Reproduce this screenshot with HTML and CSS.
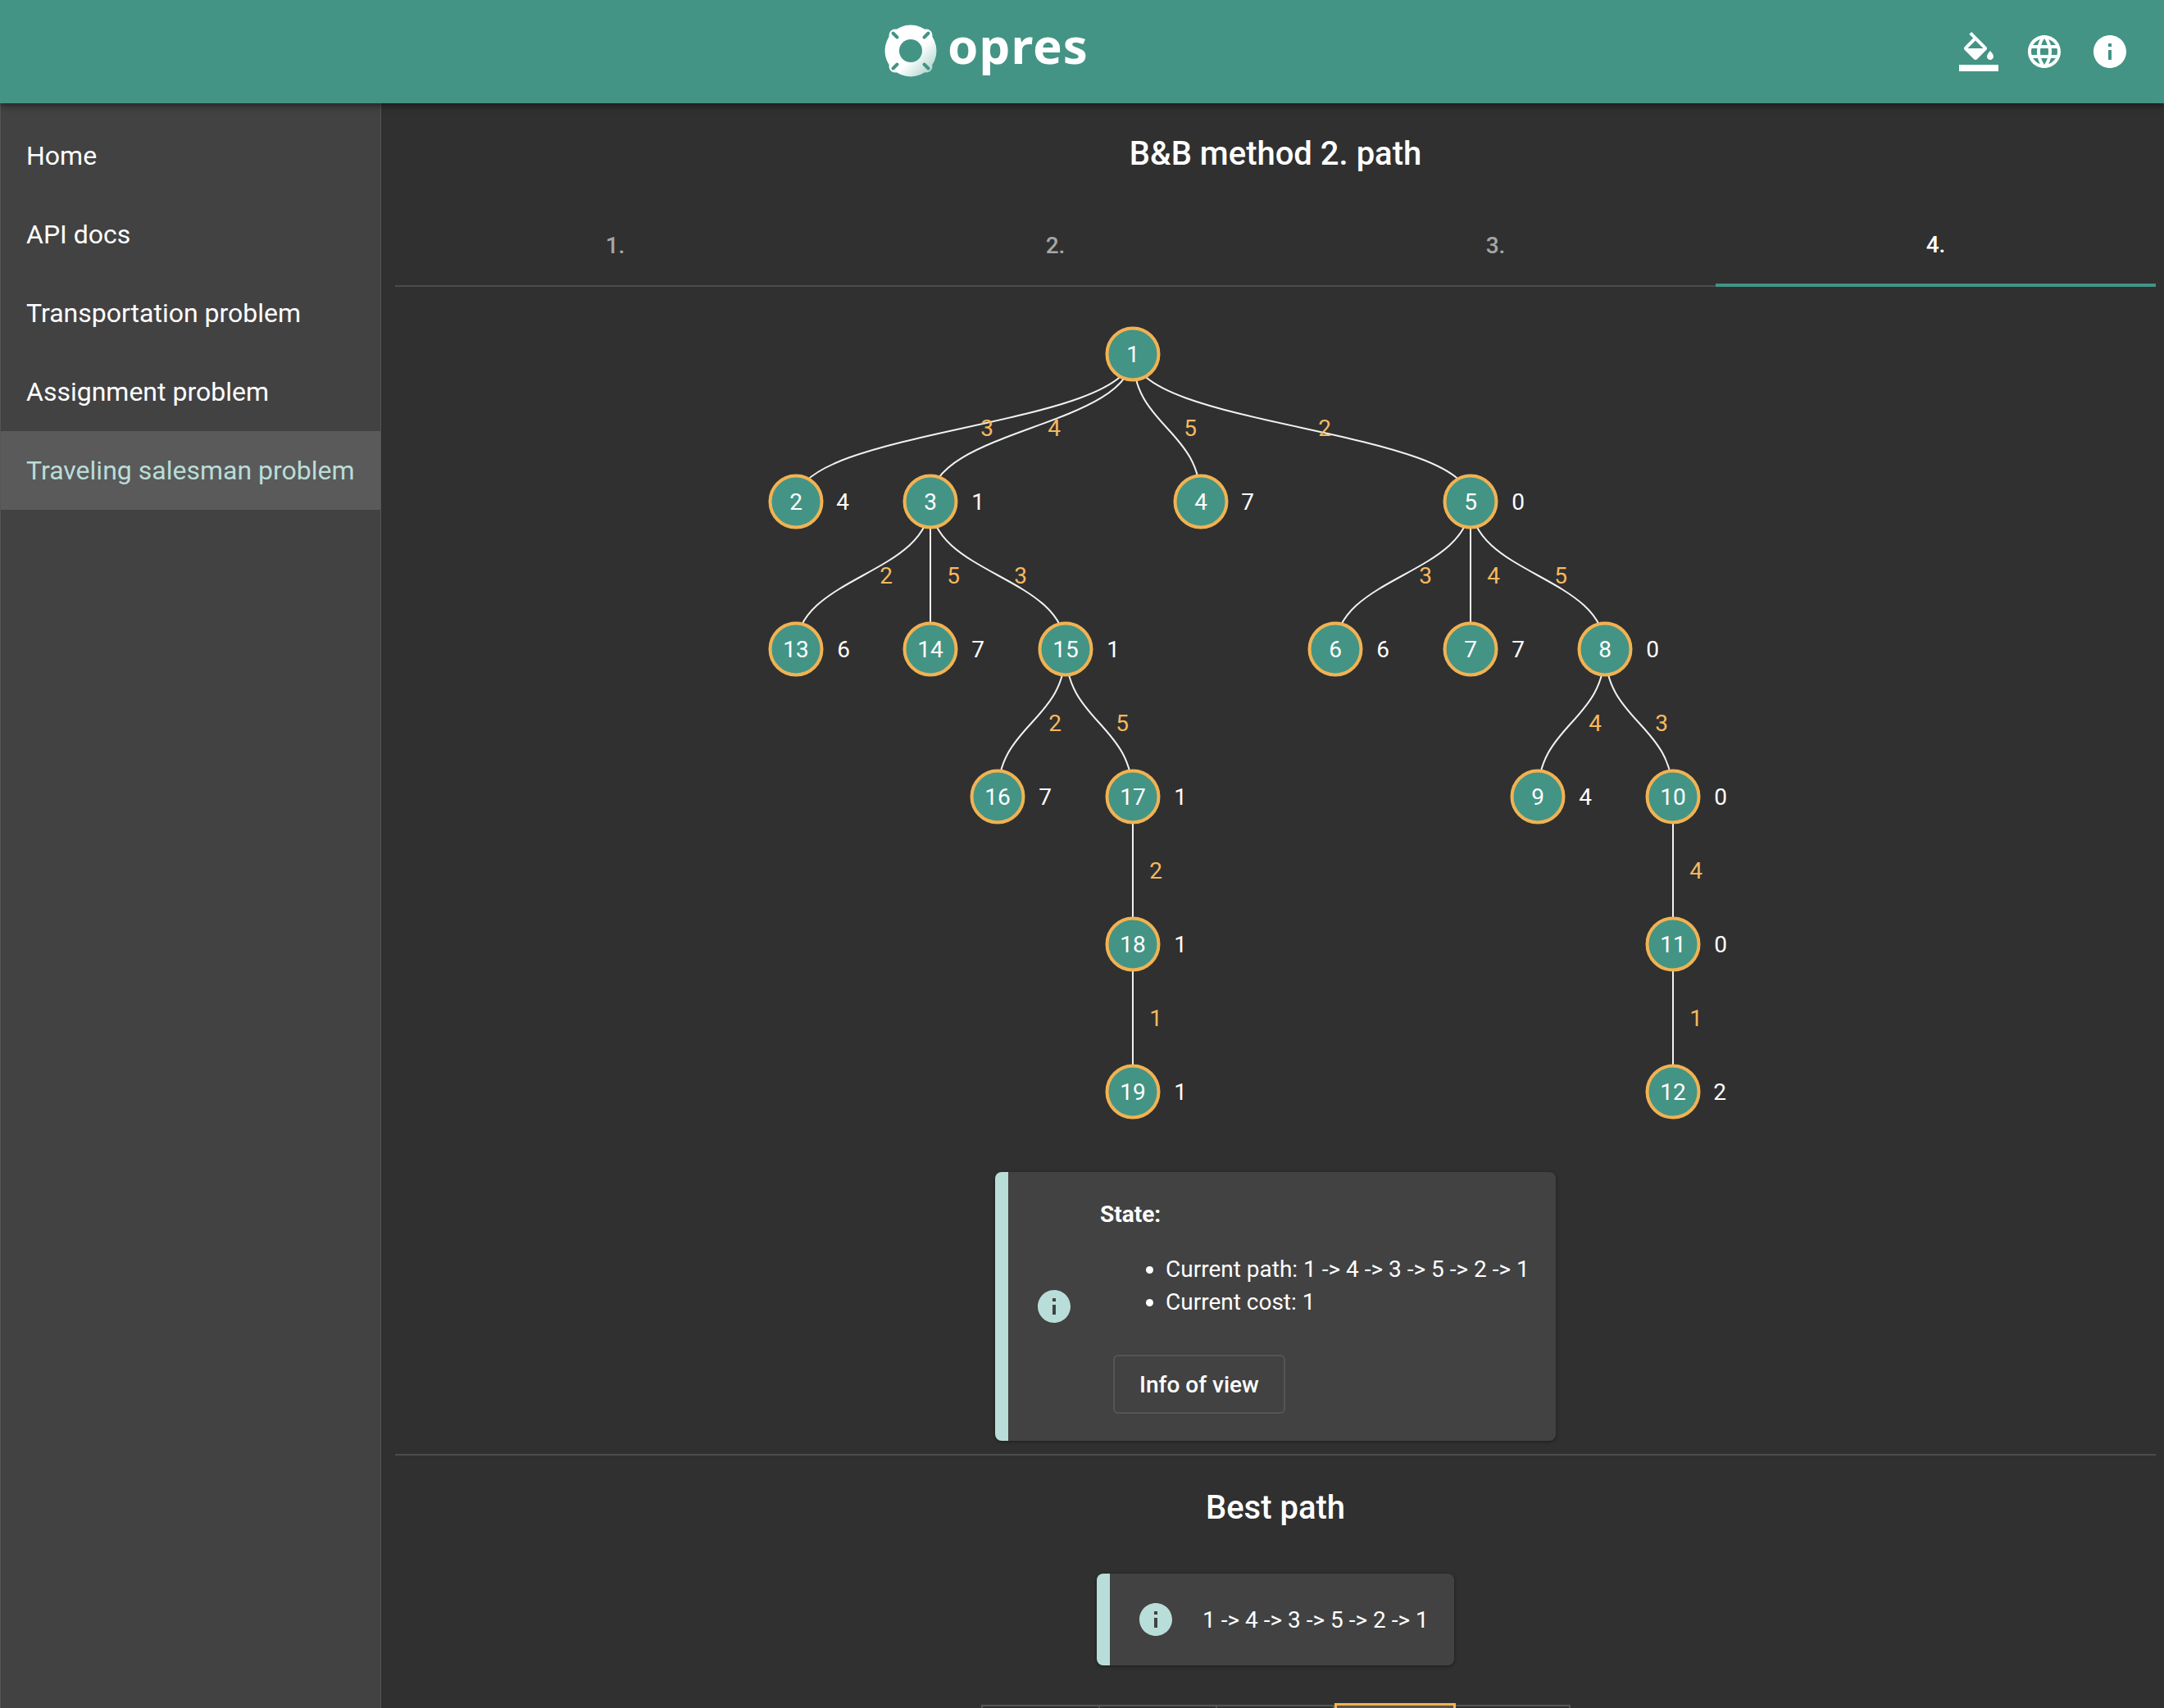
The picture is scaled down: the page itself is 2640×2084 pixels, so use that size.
FILE: index.html
```html
<!DOCTYPE html>
<html>
<head>
  <meta charset="utf-8">
  <title>opres</title>
  <link rel="stylesheet" href="styles.css">
</head>
<body>
  <header class="topbar">
    <div class="logo">
      <svg class="logo-mark" viewBox="0 0 64 64" width="64" height="64">
        <defs>
          <linearGradient id="ring" gradientUnits="userSpaceOnUse" x1="14" y1="14" x2="60" y2="60">
            <stop offset="0.5" stop-color="#ffffff"/>
            <stop offset="1" stop-color="#a6cfc8"/>
          </linearGradient>
        </defs>
        <g fill="url(#ring)">
          <circle cx="32" cy="32" r="31.500"/>
          <circle cx="13" cy="13" r="7.500"/>
          <circle cx="51" cy="13" r="7.500"/>
          <circle cx="13" cy="51" r="7.500"/>
          <circle cx="51" cy="51" r="7.500"/>
        </g>
        <circle class="logo-cut" cx="32" cy="32" r="14"/>
        <g class="logo-slots">
          <path d="M10.500 10.500l5 5"/><path d="M53.500 10.500l-5 5"/><path d="M10.500 53.500l5 -5"/><path d="M53.500 53.500l-5 -5"/>
        </g>
      </svg>
      <span class="logo-text">opres</span>
    </div>
    <div class="topbar-icons">
      <svg class="icon" viewBox="0 0 24 24"><path d="M16.560 8.940L7.620 0 6.210 1.410l2.380 2.380-5.150 5.150c-.59.59-.59 1.540 0 2.120l5.500 5.500c.29.29.68.44 1.060.44s.77-.15 1.060-.44l5.500-5.500c.59-.58.59-1.530 0-2.120zM5.210 10L10 5.210 14.790 10H5.210zM19 11.500s-2 2.170-2 3.500c0 1.100.9 2 2 2s2-.9 2-2c0-1.330-2-3.500-2-3.500zM0 20h24v4H0v-4z"/></svg>
      <svg class="icon" viewBox="0 0 24 24"><path d="M11.990 2C6.470 2 2 6.480 2 12s4.470 10 9.990 10C17.520 22 22 17.520 22 12S17.520 2 11.990 2zm6.930 6h-2.950c-.32-1.250-.78-2.450-1.380-3.560 1.840.63 3.370 1.910 4.330 3.560zM12 4.040c.83 1.200 1.480 2.530 1.910 3.960h-3.820c.43-1.430 1.080-2.760 1.910-3.960zM4.260 14C4.100 13.360 4 12.690 4 12s.1-1.360.26-2h3.380c-.08.66-.14 1.320-.14 2s.06 1.340.14 2H4.260zm.82 2h2.950c.32 1.250.78 2.450 1.380 3.560-1.840-.63-3.370-1.900-4.330-3.560zm2.950-8H5.080c.96-1.660 2.490-2.930 4.330-3.560C8.810 5.550 8.350 6.750 8.030 8zM12 19.960c-.83-1.200-1.480-2.530-1.910-3.960h3.820c-.43 1.430-1.080 2.760-1.910 3.960zM14.340 14H9.660c-.09-.66-.16-1.320-.16-2s.07-1.350.16-2h4.680c.09.65.16 1.320.16 2s-.07 1.340-.16 2zm.25 5.560c.6-1.110 1.060-2.310 1.380-3.560h2.950c-.96 1.650-2.490 2.930-4.330 3.560zM16.360 14c.08-.66.14-1.320.14-2s-.06-1.340-.14-2h3.380c.16.640.26 1.310.26 2s-.1 1.360-.26 2h-3.380z"/></svg>
      <svg class="icon" viewBox="0 0 24 24"><path d="M12 2C6.480 2 2 6.480 2 12s4.480 10 10 10 10-4.480 10-10S17.520 2 12 2zm1 15h-2v-6h2v6zm0-8h-2V7h2v2z"/></svg>
    </div>
  </header>

  <div class="layout">
    <nav class="sidebar">
      <a class="nav-item">Home</a>
      <a class="nav-item">API docs</a>
      <a class="nav-item">Transportation problem</a>
      <a class="nav-item">Assignment problem</a>
      <a class="nav-item active">Traveling salesman problem</a>
    </nav>

    <main class="content">
      <h1 class="title">B&amp;B method 2. path</h1>
      <div class="tabs">
        <div class="tab">1.</div>
        <div class="tab">2.</div>
        <div class="tab">3.</div>
        <div class="tab active">4.</div>
      </div>

      <div class="tree-wrap">
        <svg class="tree" viewBox="482 350 2148 1040" width="2148" height="1040">
          <g class="edges">
            <path d="M1382 432C1382 522 971 522 971 612"/>
            <path d="M1382 432C1382 522 1135 522 1135 612"/>
            <path d="M1382 432C1382 522 1465 522 1465 612"/>
            <path d="M1382 432C1382 522 1794 522 1794 612"/>
            <path d="M1135 612C1135 702 971 702 971 792"/>
            <path d="M1135 612L1135 792"/>
            <path d="M1135 612C1135 702 1300 702 1300 792"/>
            <path d="M1794 612C1794 702 1629 702 1629 792"/>
            <path d="M1794 612L1794 792"/>
            <path d="M1794 612C1794 702 1958 702 1958 792"/>
            <path d="M1300 792C1300 882 1217 882 1217 972"/>
            <path d="M1300 792C1300 882 1382 882 1382 972"/>
            <path d="M1958 792C1958 882 1876 882 1876 972"/>
            <path d="M1958 792C1958 882 2041 882 2041 972"/>
            <path d="M1382 972L1382 1332"/>
            <path d="M2041 972L2041 1332"/>
          </g>
          <g class="edge-labels">
            <text x="1204" y="522">3</text>
            <text x="1286" y="522">4</text>
            <text x="1452" y="522">5</text>
            <text x="1616" y="522">2</text>
            <text x="1081" y="702">2</text>
            <text x="1163" y="702">5</text>
            <text x="1245" y="702">3</text>
            <text x="1739" y="702">3</text>
            <text x="1822" y="702">4</text>
            <text x="1904" y="702">5</text>
            <text x="1287" y="882">2</text>
            <text x="1369" y="882">5</text>
            <text x="1946" y="882">4</text>
            <text x="2027" y="882">3</text>
            <text x="1410" y="1062">2</text>
            <text x="1410" y="1242">1</text>
            <text x="2069" y="1062">4</text>
            <text x="2069" y="1242">1</text>
          </g>
          <g class="nodes">
            <circle cx="1382" cy="432" r="31.500"/>
            <circle cx="971" cy="612" r="31.500"/>
            <circle cx="1135" cy="612" r="31.500"/>
            <circle cx="1465" cy="612" r="31.500"/>
            <circle cx="1794" cy="612" r="31.500"/>
            <circle cx="971" cy="792" r="31.500"/>
            <circle cx="1135" cy="792" r="31.500"/>
            <circle cx="1300" cy="792" r="31.500"/>
            <circle cx="1629" cy="792" r="31.500"/>
            <circle cx="1794" cy="792" r="31.500"/>
            <circle cx="1958" cy="792" r="31.500"/>
            <circle cx="1217" cy="972" r="31.500"/>
            <circle cx="1382" cy="972" r="31.500"/>
            <circle cx="1876" cy="972" r="31.500"/>
            <circle cx="2041" cy="972" r="31.500"/>
            <circle cx="1382" cy="1152" r="31.500"/>
            <circle cx="2041" cy="1152" r="31.500"/>
            <circle cx="1382" cy="1332" r="31.500"/>
            <circle cx="2041" cy="1332" r="31.500"/>
          </g>
          <g class="node-labels">
            <text x="1382" y="432">1</text>
            <text x="971" y="612">2</text>
            <text x="1135" y="612">3</text>
            <text x="1465" y="612">4</text>
            <text x="1794" y="612">5</text>
            <text x="971" y="792">13</text>
            <text x="1135" y="792">14</text>
            <text x="1300" y="792">15</text>
            <text x="1629" y="792">6</text>
            <text x="1794" y="792">7</text>
            <text x="1958" y="792">8</text>
            <text x="1217" y="972">16</text>
            <text x="1382" y="972">17</text>
            <text x="1876" y="972">9</text>
            <text x="2041" y="972">10</text>
            <text x="1382" y="1152">18</text>
            <text x="2041" y="1152">11</text>
            <text x="1382" y="1332">19</text>
            <text x="2041" y="1332">12</text>
            <!-- bounds next to the nodes -->
            <text x="1028" y="612">4</text>
            <text x="1193" y="612">1</text>
            <text x="1522" y="612">7</text>
            <text x="1852" y="612">0</text>
            <text x="1029" y="792">6</text>
            <text x="1193" y="792">7</text>
            <text x="1358" y="792">1</text>
            <text x="1687" y="792">6</text>
            <text x="1852" y="792">7</text>
            <text x="2016" y="792">0</text>
            <text x="1275" y="972">7</text>
            <text x="1440" y="972">1</text>
            <text x="1934" y="972">4</text>
            <text x="2099" y="972">0</text>
            <text x="1440" y="1152">1</text>
            <text x="2099" y="1152">0</text>
            <text x="1440" y="1332">1</text>
            <text x="2098" y="1332">2</text>
          </g>
        </svg>
      </div>

      <div class="alert alert-state">
        <svg class="alert-icon" viewBox="2 2 20 20"><path d="M12 2C6.480 2 2 6.480 2 12s4.480 10 10 10 10-4.480 10-10S17.520 2 12 2zm1 15h-2v-6h2v6zm0-8h-2V7h2v2z"/></svg>
        <div class="alert-body">
          <div class="state-title">State:</div>
          <ul class="state-list">
            <li>Current path: 1 -&gt; 4 -&gt; 3 -&gt; 5 -&gt; 2 -&gt; 1</li>
            <li>Current cost: 1</li>
          </ul>
          <button class="info-btn">Info of view</button>
        </div>
      </div>

      <div class="divider"></div>

      <h2 class="subtitle">Best path</h2>

      <div class="alert alert-best">
        <svg class="alert-icon" viewBox="2 2 20 20"><path d="M12 2C6.480 2 2 6.480 2 12s4.480 10 10 10 10-4.480 10-10S17.520 2 12 2zm1 15h-2v-6h2v6zm0-8h-2V7h2v2z"/></svg>
        <span>1 -&gt; 4 -&gt; 3 -&gt; 5 -&gt; 2 -&gt; 1</span>
      </div>

      <div class="steps">
        <div class="step"></div>
        <div class="step"></div>
        <div class="step"></div>
        <div class="step active"></div>
        <div class="step"></div>
      </div>
    </main>
  </div>
</body>
</html>
```

FILE: styles.css
```css
html, body {
  margin: 0;
  height: 100%;
  overflow: hidden;
}
body {
  background: #303030;
  color: #fff;
  font-family: Roboto, "Liberation Sans", sans-serif;
  font-size: 28px;
}

/* top bar */
.topbar {
  height: 126px;
  background: #439485;
  display: flex;
  align-items: center;
  position: relative;
  z-index: 2;
  box-shadow: 0 3px 8px rgba(0, 0, 0, 0.45);
  padding: 0 42px 0 1079px;
}
.topbar-icons {
  display: flex;
  gap: 32px;
  margin-left: auto;
}
.icon {
  width: 48px;
  height: 48px;
  fill: #fff;
}
.logo {
  display: flex;
  align-items: center;
  gap: 13px;
}
.logo-mark {
  display: block;
  margin-top: -2px;
}
.logo-cut {
  fill: #439485;
}
.logo-slots path {
  stroke: #439485;
  stroke-width: 4;
  stroke-linecap: round;
}
.logo-text {
  font-family: "Noto Sans", sans-serif;
  font-size: 60px;
  font-weight: 700;
  line-height: 1;
  letter-spacing: 1px;
  padding-bottom: 16px;
}

/* sidebar + content */
.layout {
  display: flex;
  height: 1958px;
}
.sidebar {
  width: 463px;
  background: #424242;
  border-left: 1px solid #555;
  border-right: 1px solid #555;
  padding-top: 16px;
  flex-shrink: 0;
}
.nav-item {
  display: flex;
  align-items: center;
  height: 96px;
  padding-left: 31px;
  font-size: 32px;
}
.nav-item.active {
  background: #5a5a5a;
  color: #b9ddd8;
}
.content {
  flex: 1;
  padding: 0 10px 0 17px;
  display: flex;
  flex-direction: column;
  align-items: center;
}
.content > * {
  flex-shrink: 0;
}
.title {
  margin: 0;
  font-size: 40px;
  font-weight: 500;
  line-height: 48px;
  padding-top: 38px;
}

/* tabs */
.tabs {
  display: flex;
  width: 100%;
  height: 125px;
  margin-top: 11px;
  border-bottom: 2px solid #4c4c4c;
}
.tab {
  flex: 1;
  display: flex;
  align-items: center;
  justify-content: center;
  font-size: 28px;
  font-weight: 500;
  color: #a6a6a6;
  padding-top: 27px;
}
.tab.active {
  color: #fff;
  border-bottom: 4px solid #439485;
  margin-bottom: -2px;
}

/* tree */
.tree-wrap {
  width: 100%;
  height: 1040px;
}
.tree {
  display: block;
}
.edges path {
  fill: none;
  stroke: #f2f2f2;
  stroke-width: 2;
}
.nodes circle {
  fill: #439485;
  stroke: #f2b252;
  stroke-width: 4;
}
.edge-labels text,
.node-labels text {
  font-size: 28px;
  text-anchor: middle;
  dominant-baseline: central;
}
.edge-labels text {
  fill: #f5b95f;
}
.node-labels text {
  fill: #fff;
}

/* alerts */
.alert {
  display: flex;
  align-items: center;
  background: #424242;
  border-left: 16px solid #b9ddd8;
  border-radius: 8px;
  box-shadow: 0 1px 4px rgba(0, 0, 0, 0.4);
  box-sizing: border-box;
}
.alert-icon {
  width: 40px;
  height: 40px;
  fill: #b9ddd8;
  flex-shrink: 0;
}
.alert-state {
  width: 684px;
  height: 328px;
  margin-top: 40px;
  padding-left: 36px;
}
.alert-body {
  margin-left: 36px;
  padding-top: 32px;
  align-self: flex-start;
}
.state-title {
  font-weight: 700;
  line-height: 40px;
}
.state-list {
  margin: 27px 0 0;
  padding: 0 0 0 80px;
  line-height: 40px;
}
.info-btn {
  display: block;
  margin: 44px 0 0 16px;
  width: 210px;
  height: 72px;
  background: transparent;
  border: 2px solid #555;
  border-radius: 6px;
  color: #fff;
  font-family: inherit;
  font-size: 28px;
  font-weight: 500;
}
.divider {
  width: 100%;
  height: 2px;
  background: #4c4c4c;
  margin-top: 16px;
}
.subtitle {
  margin: 0;
  font-size: 40px;
  font-weight: 500;
  line-height: 48px;
  padding-top: 40px;
}
.alert-best {
  width: 436px;
  height: 112px;
  margin-top: 56px;
  padding-left: 36px;
  gap: 37px;
}

/* pager at the bottom edge */
.steps {
  display: flex;
  margin-top: 48px;
  border-left: 2px solid #555;
}
.step {
  width: 143px;
  height: 60px;
  box-sizing: border-box;
  border-top: 2px solid #555;
  border-right: 2px solid #555;
}
.step.active {
  width: 148px;
  margin-top: -2px;
  height: 62px;
  border: 3px solid #f2b252;
  background: #5c5347;
}
.step:last-child {
  width: 140px;
}
```
